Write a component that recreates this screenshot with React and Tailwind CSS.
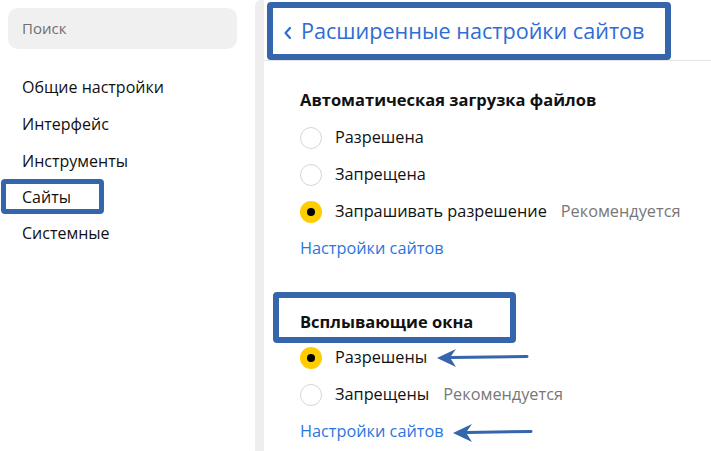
import React from 'react';

const font = { fontFamily: '"Open Sans", "Noto Sans", Arial, sans-serif' };

function Radio({ checked }) {
  return checked ? (
    <span className="flex h-[22px] w-[22px] flex-shrink-0 items-center justify-center rounded-full bg-[#ffcc00]">
      <span className="h-[8px] w-[8px] rounded-full bg-black" />
    </span>
  ) : (
    <span className="h-[22px] w-[22px] flex-shrink-0 rounded-full border border-[#d6d6d6] bg-white" />
  );
}

function Option({ label, checked, hint }) {
  return (
    <div className="flex h-[37px] items-center">
      <Radio checked={checked} />
      <span className="ml-[13px] text-[16.3px] text-[#111]">{label}</span>
      {hint ? <span className="ml-[14px] text-[16.3px] text-[#777]">{hint}</span> : null}
    </div>
  );
}

function SiteLink() {
  return (
    <div className="flex h-[37px] items-center text-[16.3px] text-[#2a76dd]">Настройки сайтов</div>
  );
}

function Arrow({ className, length }) {
  return (
    <svg className={className} width={length + 2} height="20" viewBox={`0 0 ${length + 2} 20`}>
      <line x1="14" y1="9.5" x2={length} y2="8.5" stroke="#3565aa" strokeWidth="3" strokeLinecap="round" />
      <polygon points="0,10 19,1 13,9.5 19,19" fill="#3565aa" />
    </svg>
  );
}

export default function App() {
  const nav = ['Общие настройки', 'Интерфейс', 'Инструменты', 'Сайты', 'Системные'];

  return (
    <div className="flex h-[451px] w-[711px] overflow-hidden bg-white" style={font}>
      <aside className="w-[255px] flex-shrink-0 px-[8px] pt-[8px]">
        <div className="flex h-[41px] w-[229px] items-center rounded-[10px] bg-[#f0f0f0] px-[14px] text-[15px] text-[#6f6f6f]">
          Поиск
        </div>
        <nav className="mt-[19px]">
          {nav.map((item) =>
            item === 'Сайты' ? (
              <div
                key={item}
                className="-ml-[7px] flex h-[35px] w-[103px] items-center rounded-[4px] border-[5px] border-[#3565aa] pl-[16px] text-[16px] text-[#111]"
              >
                {item}
              </div>
            ) : (
              <div key={item} className="flex h-[37px] items-center pl-[14px] text-[16px] text-[#111]">
                {item}
              </div>
            )
          )}
        </nav>
      </aside>

      <div className="w-[9px] flex-shrink-0 rounded-tl-[6px] bg-[#efeded]" />

      <main className="relative flex-1">
        <header className="h-[61px] border-b border-[#e6e6e6] pl-[3px] pt-[2px]">
          <div className="flex h-[58px] w-[404px] items-center whitespace-nowrap rounded-[4px] border-[6px] border-[#3565aa] pl-[10px] text-[21.6px] text-[#2f6cd4]">
            <svg width="10" height="14" viewBox="0 0 10 14" className="mr-[8px] mt-[3px] flex-shrink-0">
              <path d="M7 2 L2.5 7 L7 12" fill="none" stroke="#2f6cd4" strokeWidth="2.2" strokeLinecap="round" strokeLinejoin="round" />
            </svg>
            <span>Расширенные настройки сайтов</span>
          </div>
        </header>

        <div className="pl-[36px] pt-[21px]">
          <div className="flex h-[37px] items-center text-[16.5px] font-bold text-[#111]">
            Автоматическая загрузка файлов
          </div>
          <Option label="Разрешена" />
          <Option label="Запрещена" />
          <Option label="Запрашивать разрешение" checked hint="Рекомендуется" />
          <SiteLink />

          <div className="-ml-[27px] mb-[-4px] mt-[25px] h-[51px] w-[243px] rounded-[4px] border-[6px] border-[#3565aa] pl-[21px] pt-[12px]">
            <div className="text-[16.5px] font-bold leading-[24px] text-[#111]">Всплывающие окна</div>
          </div>
          <Option label="Разрешены" checked />
          <Option label="Запрещены" hint="Рекомендуется" />
          <SiteLink />
        </div>

        <Arrow className="absolute left-[173px] top-[348px]" length={90} />
        <Arrow className="absolute left-[189px] top-[423px]" length={78} />
      </main>
    </div>
  );
}
